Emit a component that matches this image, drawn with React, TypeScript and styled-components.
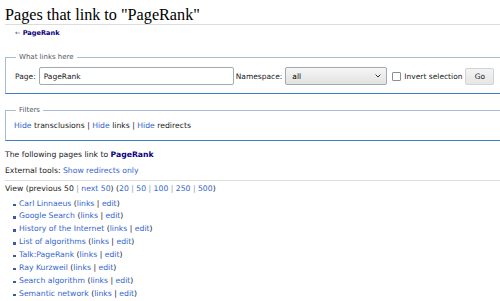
import React from "react";
import styled, { createGlobalStyle } from "styled-components";

const Global = createGlobalStyle`
  html, body { margin: 0; padding: 0; overflow: hidden; background: #fff; }
  body { font-family: "DejaVu Sans", sans-serif; color: #202122; }
`;

const Page = styled.div`
  width: 500px;
  padding-left: 5px;
  font-size: 7.7px;
`;

const Title = styled.h1`
  margin: 0;
  padding-top: 6px;
  font-family: "Liberation Serif", "DejaVu Serif", serif;
  font-weight: normal;
  font-size: 16.2px;
  line-height: 18px;
  color: #000;
  border-bottom: 1px solid #dcdcdc;
`;

const Sub = styled.div`
  margin-top: 3px;
  padding-left: 10px;
  font-size: 6.6px;
  line-height: 10px;
  color: #54595d;
`;

const Link = styled.a<{ $visited?: boolean; $bold?: boolean }>`
  color: ${(p) => (p.$visited ? "#0b0080" : "#3366cc")};
  font-weight: ${(p) => (p.$bold ? "bold" : "normal")};
  text-decoration: none;
`;

const Fieldset = styled.fieldset<{ $top: number; $pt: number; $pb: number }>`
  margin: ${(p) => p.$top}px 0 0 0;
  padding: ${(p) => p.$pt}px 8px ${(p) => p.$pb}px 8px;
  border: 1px solid #a7bcd6;
  border-bottom-color: #3b7fc2;
  min-width: 0;
`;

const Legend = styled.legend`
  padding: 0 3px;
  margin-left: 2px;
  font-size: 7px;
  line-height: 10px;
  color: #54595d;
`;

const FormRow = styled.div`
  display: flex;
  align-items: center;
  height: 18px;
  white-space: nowrap;
`;

const Label = styled.span<{ $ml?: number }>`
  margin-left: ${(p) => p.$ml ?? 0}px;
  font-size: 7.5px;
  color: #202122;
`;

const TextInput = styled.div`
  margin-left: 3px;
  width: 189px;
  height: 16px;
  border: 1px solid #a2a9b1;
  border-radius: 2px;
  background: #fff;
  display: flex;
  align-items: center;
  padding-left: 4px;
  box-sizing: content-box;
  font-size: 7.5px;
  color: #202122;
`;

const Select = styled.div`
  margin-left: 3px;
  width: 102px;
  height: 18px;
  border: 1px solid #a2a9b1;
  border-radius: 2px;
  background: linear-gradient(#f6f6f6, #e2e2e2);
  display: flex;
  align-items: center;
  justify-content: space-between;
  padding: 0 5px 0 6px;
  box-sizing: border-box;
  font-size: 7.5px;
  color: #000;
`;

const Check = styled.span`
  margin-left: 5px;
  width: 9px;
  height: 9px;
  border: 1px solid #8a8f96;
  border-radius: 1px;
  background: #fff;
  box-sizing: border-box;
`;

const GoButton = styled.div`
  margin-left: 3px;
  width: 29px;
  height: 17px;
  box-sizing: border-box;
  border: 1px solid #d0d3d7;
  border-radius: 2px;
  background: linear-gradient(#f4f4f4, #e6e6e6);
  display: flex;
  align-items: center;
  justify-content: center;
  font-size: 7.5px;
  color: #202122;
`;

const FilterLine = styled.div`
  line-height: 12px;
  white-space: nowrap;
`;

const Para = styled.div<{ $mt: number }>`
  margin-top: ${(p) => p.$mt}px;
  line-height: 12px;
  white-space: nowrap;
`;

const Divider = styled.div`
  margin-top: 3px;
  height: 1px;
  background: #dedede;
`;

const Sep = styled.span<{ $light?: boolean }>`
  color: ${(p) => (p.$light ? "#8a9bb5" : "#202122")};
`;

const List = styled.ul`
  margin: 2.6px 0 0 0;
  padding: 0 0 0 14px;
  list-style: none;
`;

const Item = styled.li`
  position: relative;
  line-height: 12.85px;
  white-space: nowrap;
  &::before {
    content: "";
    position: absolute;
    left: -6px;
    top: 6px;
    width: 2.5px;
    height: 2.5px;
    background: #3a5c9c;
  }
`;

const Chevron = () => (
  <svg width="6" height="4" viewBox="0 0 6 4">
    <path d="M0.6 0.6 L3 3 L5.4 0.6" fill="none" stroke="#333" strokeWidth="1" />
  </svg>
);

const items = [
  "Carl Linnaeus",
  "Google Search",
  "History of the Internet",
  "List of algorithms",
  "Talk:PageRank",
  "Ray Kurzweil",
  "Search algorithm",
  "Semantic network",
];

export default function App() {
  return (
    <>
      <Global />
      <Page>
        <Title>Pages that link to "PageRank"</Title>
        <Sub>
          ← <Link $visited $bold>PageRank</Link>
        </Sub>
        <Fieldset $top={14} $pt={5} $pb={8}>
          <Legend>What links here</Legend>
          <FormRow>
            <Label $ml={1}>Page:</Label>
            <TextInput>PageRank</TextInput>
            <Label $ml={2}>Namespace:</Label>
            <Select>
              <span>all</span>
              <Chevron />
            </Select>
            <Check />
            <Label $ml={3}>Invert selection</Label>
            <GoButton>Go</GoButton>
          </FormRow>
        </Fieldset>
        <Fieldset $top={11} $pt={5} $pb={8}>
          <Legend>Filters</Legend>
          <FilterLine>
            <Link>Hide</Link> transclusions | <Link>Hide</Link> links | <Link>Hide</Link> redirects
          </FilterLine>
        </Fieldset>
        <Para $mt={7.5}>
          The following pages link to <Link $visited $bold>PageRank</Link>
        </Para>
        <Para $mt={4.5}>
          External tools: <Link>Show redirects only</Link>
        </Para>
        <Divider />
        <Para $mt={2}>
          View (previous 50 <Sep $light>|</Sep> <Link>next 50</Link>) (<Link>20</Link> <Sep $light>|</Sep>{" "}
          <Link>50</Link> <Sep $light>|</Sep> <Link>100</Link> <Sep $light>|</Sep> <Link>250</Link>{" "}
          <Sep $light>|</Sep> <Link>500</Link>)
        </Para>
        <List>
          {items.map((t) => (
            <Item key={t}>
              <Link>{t}</Link> (<Link>links</Link> <Sep>|</Sep> <Link>edit</Link>)
            </Item>
          ))}
        </List>
      </Page>
    </>
  );
}
